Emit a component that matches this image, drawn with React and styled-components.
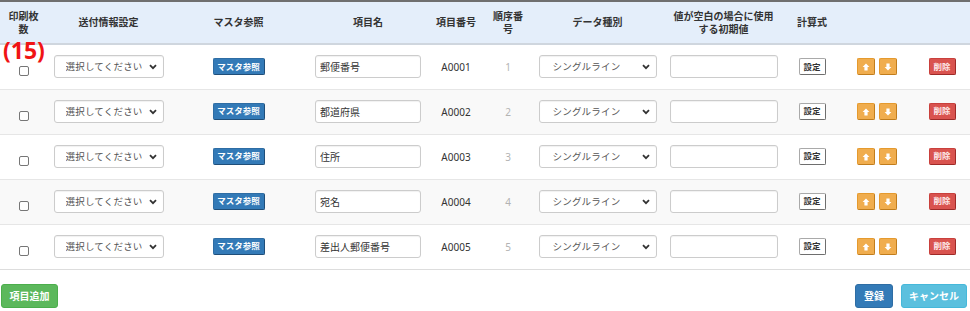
import React from 'react';
import styled, { createGlobalStyle } from 'styled-components';

const GlobalStyle = createGlobalStyle`
  body {
    margin: 0;
    background: #ffffff;
    font-family: "Noto Sans", "Noto Sans CJK JP", sans-serif;
    color: #333333;
  }
  * {
    box-sizing: border-box;
  }
`;

const chevron =
  "data:image/svg+xml;utf8,<svg xmlns='http://www.w3.org/2000/svg' width='8' height='6' viewBox='0 0 8 6'><path d='M1 1.2 L4 4.2 L7 1.2' fill='none' stroke='%23333' stroke-width='1.8'/></svg>";

const Page = styled.div`
  position: relative;
  width: 970px;
`;

const Table = styled.table`
  width: 970px;
  table-layout: fixed;
  border-collapse: collapse;
  border-top: 2px solid #6f6f6f;
  border-bottom: 1px solid #dddddd;
`;

const HeadRow = styled.tr`
  background: #e4eefa;
  height: 43px;
`;

const Th = styled.th`
  width: ${(p) => p.$w}px;
  padding: 0;
  font-size: 10px;
  line-height: 13px;
  font-weight: bold;
  color: #333333;
  text-align: center;
  vertical-align: middle;
  border-bottom: 2px solid #cfd6de;
`;

const Row = styled.tr`
  background: ${(p) => (p.$striped ? '#f9f9f9' : '#ffffff')};
`;

const Td = styled.td`
  height: 45px;
  padding: 0;
  border-top: 1px solid #e6e6e6;
  text-align: center;
  vertical-align: middle;
  font-size: 10px;
  color: ${(p) => (p.$muted ? '#b3b3b3' : '#333333')};
`;

const Check = styled.input`
  appearance: none;
  width: 10px;
  height: 10px;
  margin: 9px 0 0;
  border: 1px solid #767676;
  border-radius: 2px;
  background: #ffffff;
  vertical-align: middle;
`;

const Select = styled.select`
  appearance: none;
  width: ${(p) => p.$w}px;
  height: 23px;
  padding: 0 16px 0 ${(p) => p.$indent}px;
  border: 1px solid #cccccc;
  border-radius: 3px;
  background: #ffffff url("${chevron}") no-repeat right 6px center;
  font-family: inherit;
  font-size: 9.5px;
  letter-spacing: 0.2px;
  color: #555555;
  box-shadow: inset 0 1px 1px rgba(0, 0, 0, 0.06);
  vertical-align: middle;
`;

const TextInput = styled.input`
  width: ${(p) => p.$w}px;
  height: 23px;
  padding: 0 4px;
  border: 1px solid #cccccc;
  border-radius: 3px;
  background: #ffffff;
  font-family: inherit;
  font-size: 10px;
  color: #333333;
  box-shadow: inset 0 1px 1px rgba(0, 0, 0, 0.06);
  vertical-align: middle;
`;

const tones = {
  primary: { bg: '#337ab7', border: '#2e6da4', shade: '#1f4e79', color: '#ffffff' },
  plain: { bg: '#ffffff', border: '#a9a9a9', shade: '#6e6e6e', color: '#333333' },
  warning: { bg: '#f0ad4e', border: '#e59a2e', shade: '#c17d1c', color: '#ffffff' },
  danger: { bg: '#d9534f', border: '#c9403c', shade: '#9e2a27', color: '#fde8e8' },
};

const MiniButton = styled.button`
  display: inline-flex;
  align-items: center;
  justify-content: center;
  height: 17px;
  width: ${(p) => p.$w}px;
  padding: 0;
  border: 1px solid ${(p) => tones[p.$tone].border};
  border-bottom-color: ${(p) => tones[p.$tone].shade};
  border-right-color: ${(p) => tones[p.$tone].shade};
  border-radius: 2px;
  background: ${(p) => tones[p.$tone].bg};
  color: ${(p) => tones[p.$tone].color};
  font-family: inherit;
  font-size: 8.5px;
  font-weight: bold;
  line-height: 1;
  white-space: nowrap;
  vertical-align: middle;
`;

const ArrowGroup = styled.div`
  display: inline-flex;
  gap: 4px;
  vertical-align: middle;
`;

const Note = styled.span`
  position: absolute;
  left: 3px;
  top: 39px;
  font-size: 23px;
  font-weight: bold;
  color: #f01414;
  line-height: 1;
`;

const Footer = styled.div`
  display: flex;
  align-items: center;
  padding: 14px 3px 0 1px;
`;

const Spacer = styled.div`
  flex: 1;
`;

const actionTones = {
  success: { bg: '#5cb85c', border: '#4cae4c' },
  primary: { bg: '#337ab7', border: '#2e6da4' },
  info: { bg: '#5bc0de', border: '#46b8da' },
};

const ActionButton = styled.button`
  height: 24px;
  width: ${(p) => p.$w}px;
  padding: 0;
  margin-left: ${(p) => p.$gap || 0}px;
  border: 1px solid ${(p) => actionTones[p.$tone].border};
  border-radius: 3px;
  background: ${(p) => actionTones[p.$tone].bg};
  color: #ffffff;
  font-family: inherit;
  font-size: 10px;
  font-weight: bold;
`;

const Arrow = ({ down }) => (
  <svg width="8" height="8" viewBox="0 0 8 8" style={{ transform: down ? 'rotate(180deg)' : 'none' }}>
    <path d="M4 0.6 L7.4 4 L5.6 4 L5.6 7.4 L2.4 7.4 L2.4 4 L0.6 4 Z" fill="#ffffff" />
  </svg>
);

const rows = [
  { name: '郵便番号', code: 'A0001' },
  { name: '都道府県', code: 'A0002' },
  { name: '住所', code: 'A0003' },
  { name: '宛名', code: 'A0004' },
  { name: '差出人郵便番号', code: 'A0005' },
];

export default function App() {
  return (
    <Page>
      <GlobalStyle />
      <Table>
        <thead>
          <HeadRow>
            <Th $w={47}>印刷枚<br />数</Th>
            <Th $w={123}>送付情報設定</Th>
            <Th $w={137}>マスタ参照</Th>
            <Th $w={122}>項目名</Th>
            <Th $w={54}>項目番号</Th>
            <Th $w={50}>順序番<br />号</Th>
            <Th $w={129}>データ種別</Th>
            <Th $w={123}>値が空白の場合に使用<br />する初期値</Th>
            <Th $w={54}>計算式</Th>
            <Th $w={75}></Th>
            <Th $w={56}></Th>
          </HeadRow>
        </thead>
        <tbody>
          {rows.map((r, i) => (
            <Row key={r.code} $striped={i % 2 === 1}>
              <Td><Check type="checkbox" /></Td>
              <Td>
                <Select $w={110} $indent={11} defaultValue="">
                  <option value="">選択してください</option>
                </Select>
              </Td>
              <Td><MiniButton $tone="primary" $w={52}>マスタ参照</MiniButton></Td>
              <Td><TextInput $w={106} defaultValue={r.name} /></Td>
              <Td>{r.code}</Td>
              <Td $muted>{i + 1}</Td>
              <Td>
                <Select $w={118} $indent={13} defaultValue="single">
                  <option value="single">シングルライン</option>
                </Select>
              </Td>
              <Td><TextInput $w={108} /></Td>
              <Td><MiniButton $tone="plain" $w={27}>設定</MiniButton></Td>
              <Td>
                <ArrowGroup>
                  <MiniButton $tone="warning" $w={18}><Arrow /></MiniButton>
                  <MiniButton $tone="warning" $w={18}><Arrow down /></MiniButton>
                </ArrowGroup>
              </Td>
              <Td><MiniButton $tone="danger" $w={27}>削除</MiniButton></Td>
            </Row>
          ))}
        </tbody>
      </Table>
      <Note>(15)</Note>
      <Footer>
        <ActionButton $tone="success" $w={57}>項目追加</ActionButton>
        <Spacer />
        <ActionButton $tone="primary" $w={38}>登録</ActionButton>
        <ActionButton $tone="info" $w={66} $gap={8}>キャンセル</ActionButton>
      </Footer>
    </Page>
  );
}
